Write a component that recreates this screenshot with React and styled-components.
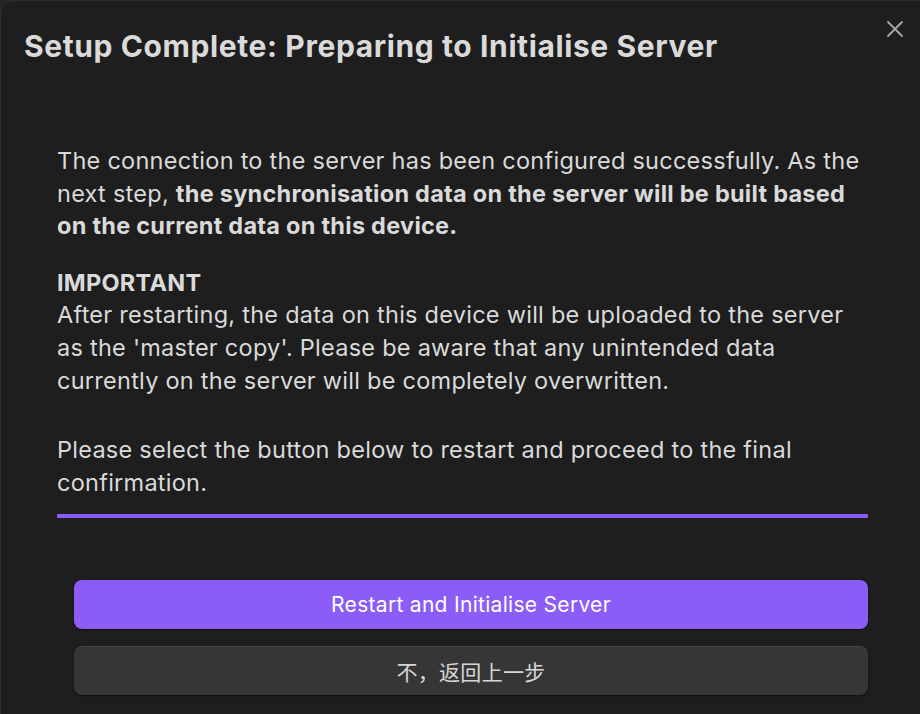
import React from "react";
import styled, { createGlobalStyle } from "styled-components";

const Global = createGlobalStyle`
  html, body { margin: 0; padding: 0; background: #262626; }
  body { font-family: Inter, "Noto Sans", "Noto Sans CJK SC", sans-serif; -webkit-font-smoothing: antialiased; }
  * { box-sizing: border-box; }
`;

const Modal = styled.div`
  position: relative;
  width: 920px;
  min-height: 714px;
  background: #1e1e1e;
  border-radius: 14px 0 0 0;
  border-top: 1px solid #2e2e2e;
  border-left: 1px solid #2e2e2e;
  overflow: hidden;
`;

const Title = styled.h1`
  margin: 0;
  padding: 27px 60px 0 23px;
  font-size: 30px;
  font-weight: 700;
  line-height: 36px;
  color: #dadada;
  letter-spacing: 0.6px;
`;

const Close = styled.button`
  position: absolute;
  top: 17px;
  right: 14px;
  width: 22px;
  height: 22px;
  padding: 0;
  border: none;
  background: transparent;
  color: #a8a8a8;
  display: flex;
  align-items: center;
  justify-content: center;
`;

const Body = styled.div`
  padding: 81px 50px 0 56px;
  color: #dadada;
  font-size: 23.5px;
  letter-spacing: 0.26px;
  line-height: 32.6px;
`;

const Para = styled.p`
  margin: 0 0 ${(p) => p.$gap ?? 24}px;
  strong { font-weight: 700; }
`;

const Heading = styled.div`
  font-weight: 700;
`;

const Rule = styled.div`
  height: 4px;
  margin: 15px 52px 0 56px;
  background: #8a5cf5;
  border-radius: 1px;
`;

const Actions = styled.div`
  display: flex;
  flex-direction: column;
  gap: 17px;
  padding: 62px 52px 0 73px;
`;

const Button = styled.button`
  height: 49px;
  border-radius: 8px;
  border: none;
  font-family: Inter, "Noto Sans CJK SC", sans-serif;
  font-size: 21px;
  letter-spacing: 0.3px;
  color: ${(p) => (p.$primary ? "#ffffff" : "#d6d6d6")};
  background: ${(p) => (p.$primary ? "#8b5cf6" : "#363636")};
  box-shadow: ${(p) =>
    p.$primary
      ? "0 1px 2px rgba(0,0,0,0.5)"
      : "inset 0 1px 0 rgba(255,255,255,0.07), 0 1px 2px rgba(0,0,0,0.5)"};
`;

export default function App() {
  return (
    <>
      <Global />
      <Modal>
        <Title>Setup Complete: Preparing to Initialise Server</Title>
        <Close aria-label="Close">
          <svg width="18" height="18" viewBox="0 0 18 18" fill="none" stroke="currentColor" strokeWidth="1.8" strokeLinecap="round">
            <path d="M2 2 L16 16 M16 2 L2 16" />
          </svg>
        </Close>
        <Body>
          <Para>
            The connection to the server has been configured successfully. As the next step,{" "}
            <strong>the synchronisation data on the server will be built based on the current data on this device.</strong>
          </Para>
          <Para $gap={37}>
            <Heading>IMPORTANT</Heading>
            After restarting, the data on this device will be uploaded to the server as the 'master copy'. Please be aware
            that any unintended data currently on the server will be completely overwritten.
          </Para>
          <Para $gap={0}>
            Please select the button below to restart and proceed to the final confirmation.
          </Para>
        </Body>
        <Rule />
        <Actions>
          <Button $primary>Restart and Initialise Server</Button>
          <Button>不，返回上一步</Button>
        </Actions>
      </Modal>
    </>
  );
}
